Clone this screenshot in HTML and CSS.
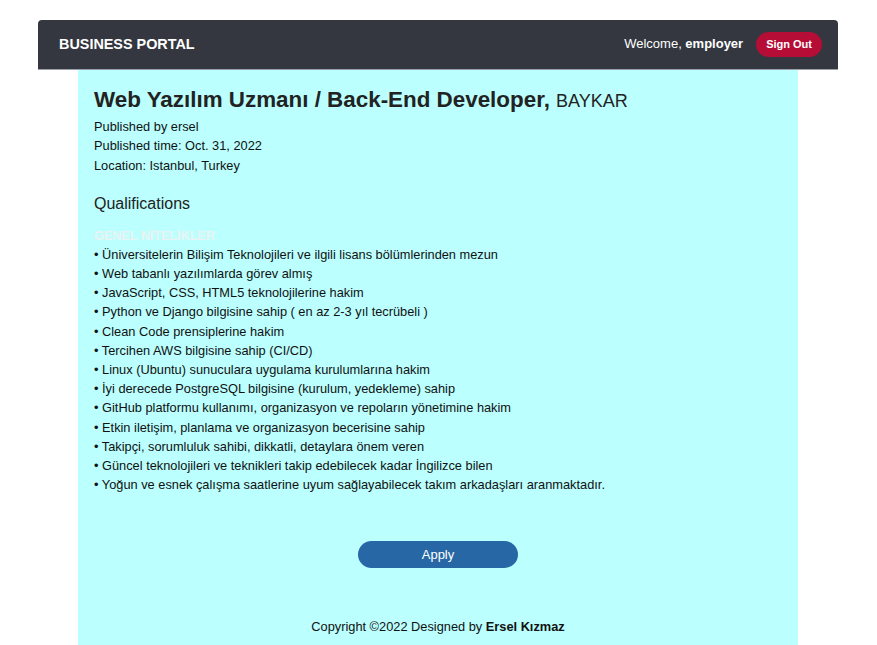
FILE: index.html
```html
<!DOCTYPE html>
<html lang="tr">
<head>
<meta charset="utf-8">
<title>Business Portal</title>
<link rel="stylesheet" href="styles.css">
</head>
<body>
<nav class="navbar">
  <span class="brand">BUSINESS PORTAL</span>
  <div class="nav-right">
    <span class="welcome">Welcome, <b>employer</b></span>
    <a class="signout" href="#">Sign Out</a>
  </div>
</nav>
<main class="content">
  <h1 class="title">Web Yazılım Uzmanı / Back-End Developer, <span class="company">BAYKAR</span></h1>
  <p class="meta">Published by ersel</p>
  <p class="meta">Published time: Oct. 31, 2022</p>
  <p class="meta">Location: Istanbul, Turkey</p>
  <h2 class="section">Qualifications</h2>
  <p class="subhead">GENEL NİTELİKLER</p>
  <ul class="quals">
    <li>• Üniversitelerin Bilişim Teknolojileri ve ilgili lisans bölümlerinden mezun</li>
    <li>• Web tabanlı yazılımlarda görev almış</li>
    <li>• JavaScript, CSS, HTML5 teknolojilerine hakim</li>
    <li>• Python ve Django bilgisine sahip ( en az 2-3 yıl tecrübeli )</li>
    <li>• Clean Code prensiplerine hakim</li>
    <li>• Tercihen AWS bilgisine sahip (CI/CD)</li>
    <li>• Linux (Ubuntu) sunuculara uygulama kurulumlarına hakim</li>
    <li>• İyi derecede PostgreSQL bilgisine (kurulum, yedekleme) sahip</li>
    <li>• GitHub platformu kullanımı, organizasyon ve repoların yönetimine hakim</li>
    <li>• Etkin iletişim, planlama ve organizasyon becerisine sahip</li>
    <li>• Takipçi, sorumluluk sahibi, dikkatli, detaylara önem veren</li>
    <li>• Güncel teknolojileri ve teknikleri takip edebilecek kadar İngilizce bilen</li>
    <li>• Yoğun ve esnek çalışma saatlerine uyum sağlayabilecek takım arkadaşları aranmaktadır.</li>
  </ul>
  <div class="apply-wrap"><button class="apply">Apply</button></div>
  <footer class="footer">Copyright ©2022 Designed by <b>Ersel Kızmaz</b></footer>
</main>
</body>
</html>
```
FILE: styles.css
```css
html, body {
  margin: 0;
  padding: 0;
  background: #ffffff;
  font-family: "Liberation Sans", Arial, sans-serif;
  color: #111;
}
body {
  padding-right: 1px;
}
.navbar {
  width: 800px;
  height: 50px;
  margin: 20px auto 0;
  background: #343740;
  border-radius: 4px 4px 0 0;
  display: flex;
  align-items: center;
  justify-content: space-between;
  padding: 0 16px 2px 21px;
  box-sizing: border-box;
  border-bottom: 1px solid #9aa0aa;
}
.brand {
  color: #fff;
  font-weight: bold;
  font-size: 14.4px;
}
.nav-right {
  display: flex;
  align-items: center;
  gap: 13px;
}
.welcome {
  color: #fff;
  font-size: 13px;
}
.signout {
  background: #b50d36;
  color: #fff;
  font-weight: bold;
  font-size: 11px;
  text-decoration: none;
  height: 25px;
  line-height: 25px;
  padding: 0 10px;
  border-radius: 13px;
  margin-top: 2px;
}
.content {
  width: 720px;
  margin: 0 auto;
  background: #bbfffe;
  padding: 17px 16px 8px;
  box-sizing: border-box;
  min-height: 575px;
}
.title {
  margin: 0 0 3px;
  font-size: 22.4px;
  font-weight: bold;
  color: #222;
  line-height: 26px;
}
.company {
  font-weight: normal;
  font-size: 18px;
}
.meta {
  margin: 0;
  font-size: 12.8px;
  line-height: 19.4px;
}
.section {
  margin: 18.5px 0 0;
  font-size: 16px;
  font-weight: normal;
  color: #222;
  line-height: 20px;
}
.subhead {
  margin: 13px 0 0;
  font-size: 12.6px;
  font-weight: bold;
  color: #eaf3f3;
  line-height: 18px;
}
.quals {
  list-style: none;
  margin: 0;
  padding: 0;
  font-size: 12.8px;
  line-height: 19.2px;
}
.apply-wrap {
  display: flex;
  justify-content: center;
  margin-top: 47px;
}
.apply {
  width: 160px;
  height: 27px;
  border: none;
  border-radius: 14px;
  background: #2767a5;
  color: #fff;
  font-family: "Liberation Sans", Arial, sans-serif;
  font-size: 13px;
  cursor: pointer;
}
.footer {
  text-align: center;
  font-size: 12.8px;
  margin-top: 50px;
  line-height: 17px;
}
```
